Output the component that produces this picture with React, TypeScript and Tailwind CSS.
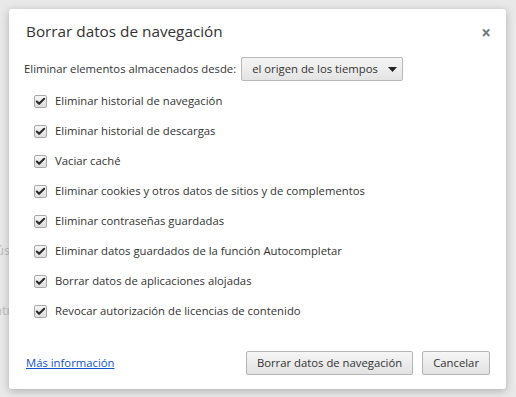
import { Check } from "lucide-react"

const items = [
  "Eliminar historial de navegación",
  "Eliminar historial de descargas",
  "Vaciar caché",
  "Eliminar cookies y otros datos de sitios y de complementos",
  "Eliminar contraseñas guardadas",
  "Eliminar datos guardados de la función Autocompletar",
  "Borrar datos de aplicaciones alojadas",
  "Revocar autorización de licencias de contenido",
]

function Box() {
  return (
    <span className="flex h-[13px] w-[13px] shrink-0 items-center justify-center rounded-[2px] border border-[#a9a9a9] bg-gradient-to-b from-[#f6f6f6] to-[#dedede]">
      <Check className="h-[11px] w-[11px] text-[#2b2b2b]" strokeWidth={4.5} />
    </span>
  )
}

export default function App() {
  return (
    <div className="relative h-[397px] w-[516px] overflow-hidden bg-[#e9e9e9] font-['Open_Sans',sans-serif] text-[11.3px] text-[#333]">
      {/* faded page text behind */}
      <span className="absolute left-[-4px] top-[241px] text-[13px] text-[#bdbdbd]">ús</span>
      <span className="absolute left-[-6px] top-[301px] text-[13px] text-[#bdbdbd]">ntı</span>

      <div className="absolute left-[9px] top-[9px] flex h-[380px] w-[497px] flex-col rounded-[3px] bg-white shadow-[0_2px_8px_rgba(0,0,0,0.25)]">
        <div className="flex items-start justify-between pl-[17px] pr-[15px] pt-[12px]">
          <h1 className="text-[15.3px] leading-[20px]">Borrar datos de navegación</h1>
          <span className="mt-[3px] text-[17px] font-bold leading-none text-[#777]">×</span>
        </div>

        <div className="mt-[16px] flex items-center gap-[5px] pl-[15px]">
          <span className="whitespace-nowrap">Eliminar elementos almacenados desde:</span>
          <div className="flex h-[24px] w-[162px] items-center justify-between rounded-[2px] border border-[#b9b9b9] bg-gradient-to-b from-[#f5f5f5] to-[#e4e4e4] pl-[10px] pr-[5px]">
            <span className="whitespace-nowrap">el origen de los tiempos</span>
            <svg width="9" height="5" viewBox="0 0 9 5">
              <path d="M0 0h9L4.5 5z" fill="#222" />
            </svg>
          </div>
        </div>

        <div className="mt-[5px] flex flex-col pl-[25px]">
          {items.map((t) => (
            <label key={t} className="flex h-[30px] items-center gap-[8px]">
              <Box />
              <span className="whitespace-nowrap">{t}</span>
            </label>
          ))}
        </div>

        <div className="mt-auto flex items-center justify-between pb-[14px] pl-[17px] pr-[16px]">
          <a className="text-[#1155cc] underline">Más información</a>
          <div className="flex gap-[9px]">
            <button className="h-[24px] rounded-[2px] border border-[#b5b5b5] bg-gradient-to-b from-[#f6f6f6] to-[#e2e2e2] px-[10px] text-[#333]">
              Borrar datos de navegación
            </button>
            <button className="h-[24px] rounded-[2px] border border-[#b5b5b5] bg-gradient-to-b from-[#f6f6f6] to-[#e2e2e2] px-[10px] text-[#333]">
              Cancelar
            </button>
          </div>
        </div>
      </div>
    </div>
  )
}
